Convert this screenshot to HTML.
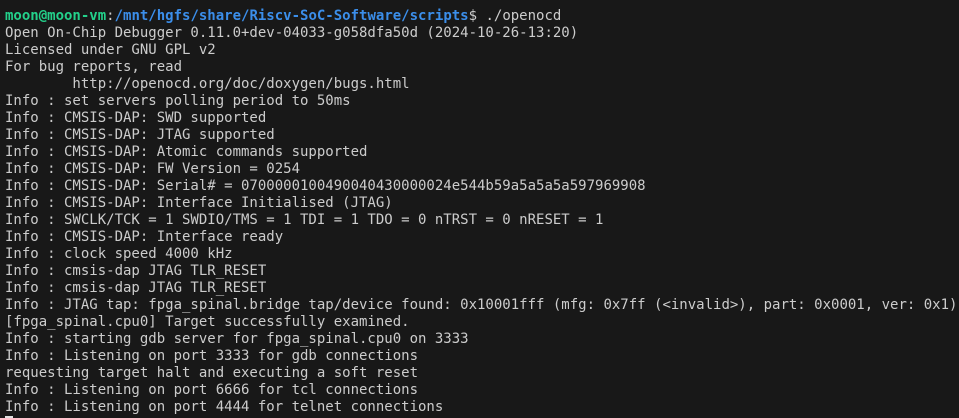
<!DOCTYPE html>
<html><head><style>
html,body{margin:0;padding:0;background:#181818;width:959px;height:418px;overflow:hidden}
pre{margin:0;padding:8px 0 0 5px;font-family:"DejaVu Sans Mono","Liberation Mono",monospace;font-size:14px;line-height:17px;color:#cccccc;white-space:pre}
.g{color:#23d18b;font-weight:bold}.b{color:#3b8eea;font-weight:bold}
.c{display:inline-block;width:8px;height:17px;background:#e0e0e0;vertical-align:top}
</style></head><body><pre><span class="g">moon@moon-vm</span>:<span class="b">/mnt/hgfs/share/Riscv-SoC-Software/scripts</span>$ ./openocd
Open On-Chip Debugger 0.11.0+dev-04033-g058dfa50d (2024-10-26-13:20)
Licensed under GNU GPL v2
For bug reports, read
        http://openocd.org/doc/doxygen/bugs.html
Info : set servers polling period to 50ms
Info : CMSIS-DAP: SWD supported
Info : CMSIS-DAP: JTAG supported
Info : CMSIS-DAP: Atomic commands supported
Info : CMSIS-DAP: FW Version = 0254
Info : CMSIS-DAP: Serial# = 0700000100490040430000024e544b59a5a5a5a597969908
Info : CMSIS-DAP: Interface Initialised (JTAG)
Info : SWCLK/TCK = 1 SWDIO/TMS = 1 TDI = 1 TDO = 0 nTRST = 0 nRESET = 1
Info : CMSIS-DAP: Interface ready
Info : clock speed 4000 kHz
Info : cmsis-dap JTAG TLR_RESET
Info : cmsis-dap JTAG TLR_RESET
Info : JTAG tap: fpga_spinal.bridge tap/device found: 0x10001fff (mfg: 0x7ff (&lt;invalid&gt;), part: 0x0001, ver: 0x1)
[fpga_spinal.cpu0] Target successfully examined.
Info : starting gdb server for fpga_spinal.cpu0 on 3333
Info : Listening on port 3333 for gdb connections
requesting target halt and executing a soft reset
Info : Listening on port 6666 for tcl connections
Info : Listening on port 4444 for telnet connections
<span class="c"></span></pre></body></html>
